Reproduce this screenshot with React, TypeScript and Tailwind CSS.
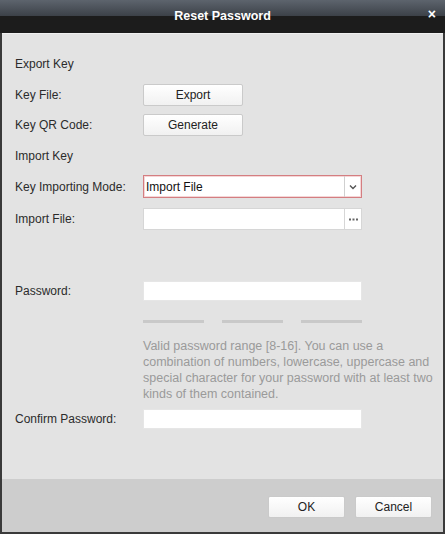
import React from "react";

const Label = ({ children }: { children: React.ReactNode }) => (
  <div className="w-[128px] shrink-0 text-[12px] text-[#2b2b2b]">{children}</div>
);

const Btn = ({ children, w }: { children: React.ReactNode; w: string }) => (
  <div
    className={`${w} h-[22px] flex items-center justify-center rounded-[2px] border border-[#cacaca] bg-[linear-gradient(to_bottom,#ffffff,#f1f1f1)] text-[12px] text-[#222]`}
  >
    {children}
  </div>
);

export default function App() {
  return (
    <div
      className="w-[445px] h-[534px] flex flex-col bg-[#3a3a3a]"
      style={{ fontFamily: '"Liberation Sans", Arial, sans-serif' }}
    >
      {/* title bar */}
      <div className="h-[33px] shrink-0 relative flex items-center justify-center bg-[linear-gradient(to_bottom,#5d646d_0%,#3b4047_50%,#1c1c1c_50%,#1c1c1c_100%)]">
        <span className="text-white font-bold text-[12.5px]">Reset Password</span>
        <span className="absolute right-[9px] top-[7px] text-white font-bold text-[14px] leading-none">×</span>
      </div>
      <div className="flex-1 flex flex-col mx-[2px] mb-[2px] bg-[#e3e3e3] border-t border-[#f0f0f0]">
        <div className="flex-1 flex flex-col pl-[13px] pt-[20px]">
          <div className="h-[20px] flex items-center text-[12px] text-[#2b2b2b]">Export Key</div>
          <div className="h-[22px] mt-[10px] flex items-center">
            <Label>Key File:</Label>
            <Btn w="w-[100px]">Export</Btn>
          </div>
          <div className="h-[22px] mt-[8px] flex items-center">
            <Label>Key QR Code:</Label>
            <Btn w="w-[100px]">Generate</Btn>
          </div>
          <div className="h-[20px] mt-[10px] flex items-center text-[12px] text-[#2b2b2b]">Import Key</div>
          <div className="h-[23px] mt-[9px] flex items-center">
            <Label>Key Importing Mode:</Label>
            <div className="w-[219px] h-[23px] flex border border-[#d47e81] bg-white shadow-[inset_0_0_0_1px_#f5d6d7]">
              <div className="flex-1 flex items-center pl-[2px] text-[12px] text-[#111]">Import File</div>
              <div className="w-[17px] border-l border-[#d0d0d0] flex items-center justify-center">
                <svg width="8" height="6" viewBox="0 0 8 6">
                  <path d="M1 1.5 L4 4.5 L7 1.5" stroke="#555" strokeWidth="1.4" fill="none" />
                </svg>
              </div>
            </div>
          </div>
          <div className="h-[22px] mt-[10px] flex items-center">
            <Label>Import File:</Label>
            <div className="w-[219px] h-[22px] flex border border-[#d6d6d6] bg-white">
              <div className="flex-1" />
              <div className="w-[17px] border-l border-[#d6d6d6] flex items-center justify-center">
                <svg width="9" height="3" viewBox="0 0 9 3">
                  <rect x="0" y="0.5" width="2" height="2" fill="#666" />
                  <rect x="3.5" y="0.5" width="2" height="2" fill="#666" />
                  <rect x="7" y="0.5" width="2" height="2" fill="#666" />
                </svg>
              </div>
            </div>
          </div>
          <div className="h-[20px] mt-[51px] flex items-center">
            <Label>Password:</Label>
            <div className="w-[219px] h-[20px] bg-white border border-[#e6e6e6]" />
          </div>
          <div className="flex ml-[128px] mt-[19px] gap-[18px]">
            <div className="w-[61px] h-[3px] bg-[#c9c9c9]" />
            <div className="w-[61px] h-[3px] bg-[#c9c9c9]" />
            <div className="w-[61px] h-[3px] bg-[#c9c9c9]" />
          </div>
          <div className="ml-[128px] mt-[15px] w-[292px] text-[12.5px] leading-[16px] text-[#9a9a9a]">
            Valid password range [8-16]. You can use a combination of numbers, lowercase, uppercase and special character for your password with at least two kinds of them contained.
          </div>
          <div className="h-[20px] mt-[7px] flex items-center">
            <Label>Confirm Password:</Label>
            <div className="w-[219px] h-[20px] bg-white border border-[#e6e6e6]" />
          </div>
        </div>
        <div className="h-[53px] shrink-0 bg-[#cdcdcd] flex items-start justify-end gap-[10px] pr-[11px] pt-[17px]">
          <Btn w="w-[77px]">OK</Btn>
          <Btn w="w-[77px]">Cancel</Btn>
        </div>
      </div>
    </div>
  );
}
